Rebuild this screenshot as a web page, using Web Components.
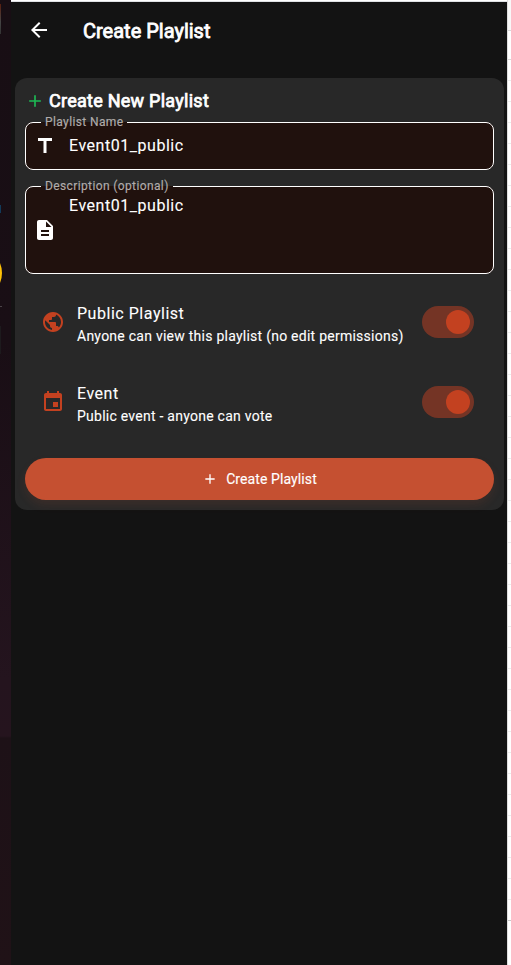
<!DOCTYPE html>
<html lang="en">
<head>
<meta charset="utf-8">
<title>Create Playlist</title>
<style>
html,body{margin:0;height:100%;overflow:hidden;background:#fff}
body{font-family:Roboto,sans-serif;color:#fff}
</style>
</head>
<body>
<playlist-page>
  <app-bar slot="bar">Create Playlist</app-bar>
  <playlist-card heading="Create New Playlist">
    <text-field label="Playlist Name" icon="title">Event01_public</text-field>
    <text-field label="Description (optional)" icon="doc" multiline>Event01_public</text-field>
    <switch-row icon="globe">Public Playlist<span slot="sub">Anyone can view this playlist (no edit permissions)</span></switch-row>
    <switch-row icon="event">Event<span slot="sub">Public event - anyone can vote</span></switch-row>
    <pill-button>Create Playlist</pill-button>
  </playlist-card>
</playlist-page>
<script>
const ICONS = {
  back: 'M20 11H7.83l5.59-5.59L12 4l-8 8 8 8 1.41-1.41L7.83 13H20v-2z',
  add: 'M19 13h-6v6h-2v-6H5v-2h6V5h2v6h6v2z',
  title: 'M5 4v3h5.5v12h3V7H19V4z',
  doc: 'M14 2H6c-1.1 0-2 .9-2 2v16c0 1.1.89 2 1.99 2H18c1.1 0 2-.9 2-2V8l-6-6zm2 16H8v-2h8v2zm0-4H8v-2h8v2zm-3-5V3.5L18.5 9H13z',
  globe: 'M12 2C6.48 2 2 6.48 2 12s4.48 10 10 10 10-4.48 10-10S17.52 2 12 2zm-1 17.93c-3.95-.49-7-3.85-7-7.93 0-.62.08-1.21.21-1.79L9 15v1c0 1.1.9 2 2 2v1.93zm6.9-2.54c-.26-.81-1-1.39-1.9-1.39h-1v-3c0-.55-.45-1-1-1H8v-2h2c.55 0 1-.45 1-1V7h2c1.1 0 2-.9 2-2v-.41c2.93 1.19 5 4.06 5 7.41 0 2.08-.8 3.97-2.1 5.39z',
  event: 'M17 12h-5v5h5v-5zM16 1v2H8V1H6v2H5c-1.11 0-1.99.9-1.99 2L3 19c0 1.1.89 2 2 2h14c1.1 0 2-.9 2-2V5c0-1.1-.9-2-2-2h-1V1h-2zm3 18H5V8h14v11z'
};
const define = (name, render) => customElements.define(name, class extends HTMLElement {
  connectedCallback() {
    if (!this.shadowRoot) this.attachShadow({mode: 'open'}).innerHTML = render(this);
  }
});
const icon = (name, size) => `<md-icon name="${name}" size="${size}"></md-icon>`;

define('md-icon', el => `<style>:host{display:block;flex:none;line-height:0}svg{display:block;fill:currentColor}</style>
  <svg width="${el.getAttribute('size')}" height="${el.getAttribute('size')}" viewBox="0 0 24 24"><path d="${ICONS[el.getAttribute('name')]}"/></svg>`);

define('left-backdrop', () => `<style>
  :host{display:block;overflow:hidden;background:linear-gradient(#180e14,#190e15 340px,#24141e 680px,#25141e 736px,#1d1117 738px,#201217 965px)}
  i{display:block}
  .photo{width:1px;height:30px;margin-top:4px;background:linear-gradient(#5a1f10,#444 60%,#333)}
  .dot{width:1px;height:8px;margin-top:171px;background:#123a5a}
  .sun{width:52px;height:52px;border-radius:50%;margin:34px 0 0 -50px;background:#ffc107}
  .line{width:2px;height:1px;margin-top:7px;background:#4b4448}
  .tile{width:1px;height:28px;margin-top:19px;background:#1d1a1d}
  </style><i class="photo"></i><i class="dot"></i><i class="sun"></i><i class="line"></i><i class="tile"></i>`);

define('sheet-edge', () => `<style>
  :host{display:flex;flex-direction:column;border-left:1px solid #dedede;background:#fff}
  i{box-sizing:border-box;flex:none;height:21px;border-bottom:1px solid #ececec}
  .a{height:31px;background:#f8f8f8;border-color:#d8d8d8}.b{height:29px;border-color:#d8d8d8}.z{border-color:#c8c8c8}
  </style><i class="a"></i><i class="b"></i>${'<i></i>'.repeat(40)}<i class="z"></i>`);

define('playlist-page', () => `<style>
  :host{display:grid;grid-template-columns:11px 496px 4px;height:965px}
  .main{display:flex;flex-direction:column;border-top:1px solid #fff;background:#131313}
  .top{height:1px;flex:none;background:#dfe1e4}
  </style><left-backdrop></left-backdrop>
  <div class="main"><div class="top"></div><slot name="bar"></slot><slot></slot></div>
  <sheet-edge></sheet-edge>`);

define('app-bar', () => `<style>
  :host{display:flex;align-items:center;gap:32px;height:56px;padding-left:16px}
  h1{margin:2px 0 0;font-size:20px;line-height:24px;font-weight:400;-webkit-text-stroke:.8px #fff}
  </style>${icon('back', 24)}<h1><slot></slot></h1>`);

define('playlist-card', el => `<style>
  :host{display:flex;flex-direction:column;box-sizing:border-box;width:489px;height:432px;margin:20px 0 0 4px;padding:10px;border-radius:12px;background:#282828}
  header{display:flex;align-items:center;gap:4px;height:26px;color:#1db954}
  h2{margin:0;color:#fff;font-size:18px;line-height:24px;font-weight:400;letter-spacing:.26px;-webkit-text-stroke:.75px #fff}
  </style><header>${icon('add', 20)}<h2>${el.getAttribute('heading')}</h2></header><slot></slot>`);

define('text-field', el => {
  const multi = el.hasAttribute('multiline');
  return `<style>
  :host{display:block;flex:none;margin-top:${multi ? 9 : 1}px}
  fieldset{box-sizing:border-box;min-width:0;height:${multi ? 95 : 55}px;margin:0;padding:0 7px;border:1px solid #fff;border-radius:8px;background:#20110d}
  legend{height:14px;margin-left:8px;padding:0 4px;font-size:12px;line-height:14px;letter-spacing:.38px;color:#b0acab;-webkit-text-stroke:.15px #b0acab}
  .row{display:flex;gap:12px;height:${multi ? 74 : 34}px;align-items:center}
  .value{align-self:${multi ? 'flex-start' : 'center'};margin-top:${multi ? 1 : 0}px;font-size:16px;line-height:24px;letter-spacing:.53px;color:#fff;-webkit-text-stroke:.1px #fff}
  </style><fieldset><legend>${el.getAttribute('label')}</legend><div class="row">${icon(el.getAttribute('icon'), 24)}<span class="value"><slot></slot></span></div></fieldset>`;
});

define('toggle-switch', () => `<style>
  :host{display:flex;flex:none;align-items:center;justify-content:flex-end;box-sizing:border-box;width:52px;height:32px;padding:4px;border-radius:16px;background:#743425}
  i{width:24px;height:24px;border-radius:50%;background:#c34120}
  </style><i></i>`);

define('switch-row', el => `<style>
  :host{display:flex;flex:none;align-items:center;height:80px;padding:0 20px 0 16px}
  :host([icon=globe]){margin-top:8px}
  md-icon{color:#c34120}
  .copy{flex:1;margin-left:12px;padding-top:4px;white-space:nowrap;-webkit-text-stroke:.1px #fff}
  .title{font-size:16px;line-height:24px;letter-spacing:.53px}
  .sub{font-size:14px;line-height:20px;letter-spacing:.25px}
  </style>${icon(el.getAttribute('icon'), 24)}<div class="copy"><div class="title"><slot></slot></div><div class="sub"><slot name="sub"></slot></div></div><toggle-switch></toggle-switch>`);

define('pill-button', () => `<style>
  :host{display:flex;flex:none;align-items:center;justify-content:center;gap:8px;height:42px;margin-top:16px;border-radius:21px;background:#c55031;box-shadow:0 5px 10px rgba(197,80,49,.12);font-size:14px;letter-spacing:.1px}
  span{-webkit-text-stroke:.15px #fff}
  </style>${icon('add', 16)}<span><slot></slot></span>`);
</script>
</body>
</html>
